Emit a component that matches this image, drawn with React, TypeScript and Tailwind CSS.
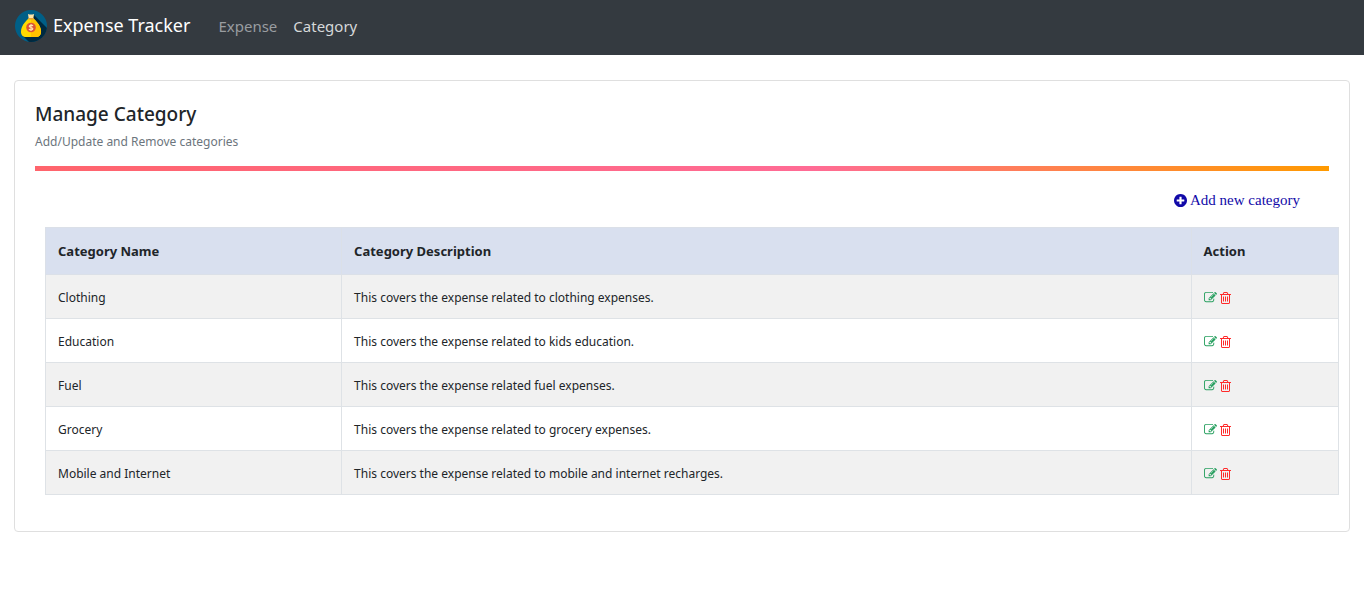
const categories = [
  { name: "Clothing", description: "This covers the expense related to clothing expenses." },
  { name: "Education", description: "This covers the expense related to kids education." },
  { name: "Fuel", description: "This covers the expense related fuel expenses." },
  { name: "Grocery", description: "This covers the expense related to grocery expenses." },
  { name: "Mobile and Internet", description: "This covers the expense related to mobile and internet recharges." },
];

function MoneyBagLogo() {
  return (
    <svg viewBox="0 0 32 32" className="size-8 shrink-0" aria-hidden="true">
      <defs>
        <clipPath id="disc">
          <circle cx="16" cy="16" r="16" />
        </clipPath>
      </defs>
      <g clipPath="url(#disc)">
        <rect width="32" height="32" fill="#005f87" />
        <path d="M19 5 L34 20 V34 H16 L8 26 Z" fill="#00293f" />
        <path d="M13.5 8.5 C10 12 6 16 6 21.5 C6 25.5 8 27 11 27 H21 C24 27 26 25.5 26 21.5 C26 16 22 12 18.5 8.5 Z" fill="#ffda00" />
        <path d="M16 8.5 H18.5 C22 12 26 16 26 21.5 C26 25.5 24 27 21 27 H16 Z" fill="#ffc200" />
        <path d="M13 4 Q16 5.2 19 4 L18.3 8.5 H13.7 Z" fill="#fee6a8" />
        <path d="M13.4 8 H18.6 V9.4 H13.4 Z" fill="#e8a33a" />
        <circle cx="16" cy="17.5" r="4.8" fill="#dc5336" />
        <path
          d="M17.9 16 C17.5 14.9 14.2 14.8 14.2 16.3 C14.2 17.8 17.9 17.2 17.9 18.8 C17.9 20.3 14.4 20.2 14 19 M16 14 V21"
          fill="none"
          stroke="#ffe7ae"
          strokeWidth="1.1"
        />
      </g>
    </svg>
  );
}

function PlusCircleIcon() {
  return (
    <svg viewBox="128 128 1536 1536" className="size-[13px]" fill="currentColor" aria-hidden="true">
      <path d="M1344 960v-128q0-26-19-45t-45-19h-256v-256q0-26-19-45t-45-19h-128q-26 0-45 19t-19 45v256h-256q-26 0-45 19t-19 45v128q0 26 19 45t45 19h256v256q0 26 19 45t45 19h128q26 0 45-19t19-45v-256h256q26 0 45-19t19-45zm320-64q0 209-103 385.5t-279.5 279.5-385.5 103-385.5-103-279.5-279.5-103-385.5 103-385.5 279.5-279.5 385.5-103 385.5 103 279.5 279.5 103 385.5z" />
    </svg>
  );
}

function EditIcon() {
  return (
    <svg viewBox="0 0 1792 1792" className="size-[13px]" fill="currentColor" aria-hidden="true">
      <path d="M888 1184l116-116-152-152-116 116v56h96v96h56zm440-720q-16-16-33 1l-350 350q-17 17-1 33t33-1l350-350q17-17 1-33zm80 594v190q0 119-84.5 203.5t-203.5 84.5h-832q-119 0-203.5-84.5t-84.5-203.5v-832q0-119 84.5-203.5t203.5-84.5h832q63 0 117 25 15 7 18 23 3 17-9 29l-49 49q-14 14-32 8-23-6-45-6h-832q-66 0-113 47t-47 113v832q0 66 47 113t113 47h832q66 0 113-47t47-113v-126q0-13 9-22l64-64q15-15 35-7t20 29zm-96-738l288 288-672 672h-288v-288zm444 132l-92 92-288-288 92-92q28-28 68-28t68 28l152 152q28 28 28 68t-28 68z" />
    </svg>
  );
}

function TrashIcon() {
  return (
    <svg viewBox="192 0 1408 1792" className="h-[14px] w-[11px]" fill="currentColor" aria-hidden="true">
      <path d="M704 736v576q0 14-9 23t-23 9h-64q-14 0-23-9t-9-23v-576q0-14 9-23t23-9h64q14 0 23 9t9 23zm256 0v576q0 14-9 23t-23 9h-64q-14 0-23-9t-9-23v-576q0-14 9-23t23-9h64q14 0 23 9t9 23zm256 0v576q0 14-9 23t-23 9h-64q-14 0-23-9t-9-23v-576q0-14 9-23t23-9h64q14 0 23 9t9 23zm128 724v-948h-896v948q0 22 7 40.5t14.5 27 10.5 8.5h832q3 0 10.5-8.5t14.5-27 7-40.5zm-672-1076h448l-48-117q-7-9-17-11h-317q-10 2-17 11zm928 32v64q0 14-9 23t-23 9h-96v948q0 83-47 143.5t-113 60.5h-832q-66 0-113-58.5t-47-141.5v-952h-96q-14 0-23-9t-9-23v-64q0-14 9-23t23-9h309l70-167q15-37 54-63t79-26h320q40 0 79 26t54 63l70 167h309q14 0 23 9t9 23z" />
    </svg>
  );
}

export default function App() {
  return (
    <div className="min-h-screen bg-white font-['Noto_Sans','Open_Sans',sans-serif] text-[#212529]">
      <nav className="flex h-[55px] items-center bg-[#343a40] px-[15px] pb-1">
        <a href="#" className="flex items-center gap-1.5 text-[18px] leading-8 text-white">
          <MoneyBagLogo />
          <span className="pb-[2px] leading-6">Expense Tracker</span>
        </a>
        <div className="ml-7 flex gap-4 text-[15px] leading-6">
          <a href="#expense" className="text-[#999da0]">Expense</a>
          <a href="#category" className="text-[#d6d8d9]">Category</a>
        </div>
      </nav>

      <main className="mx-[14px] mt-[25px] rounded border border-[#dfdfdf] px-5 pt-5 pb-9">
        <h1 className="text-[19px] leading-[26px] font-medium">Manage Category</h1>
        <p className="mt-[3px] text-xs leading-6 text-[#6c757d]">Add/Update and Remove categories</p>
        <div className="mt-3 h-[5px] bg-[linear-gradient(90deg,#ff646c,#ff6b95_60%,#ff9a00)]" />

        <div className="mt-[18px] flex justify-end pr-[29px]">
          <a
            href="#add"
            className="flex items-center gap-[3px] font-['Liberation_Serif',serif] text-[15px] leading-[22px] text-[#1109a8]"
          >
            <PlusCircleIcon />
            Add new category
          </a>
        </div>

        <div className="mt-4 -mr-[10px] ml-[10px]">
          <table className="w-full table-fixed border-collapse text-left text-xs leading-5">
            <colgroup>
              <col className="w-[22.9%]" />
              <col className="w-[65.7%]" />
              <col className="w-[11.4%]" />
            </colgroup>
            <thead>
              <tr className="h-[47px] bg-[#d9e0ef] text-[13px]">
                <th className="border border-[#dbe0e8] px-3 font-bold">Category Name</th>
                <th className="border border-[#dbe0e8] px-3 font-bold">Category Description</th>
                <th className="border border-[#dbe0e8] px-3 font-bold">Action</th>
              </tr>
            </thead>
            <tbody>
              {categories.map((category) => (
                <tr key={category.name} className="h-11 odd:bg-[#f1f1f1]">
                  <td className="border border-[#dee2e6] px-3 pt-[2px]">{category.name}</td>
                  <td className="border border-[#dee2e6] px-3 pt-[2px]">{category.description}</td>
                  <td className="border border-[#dee2e6] px-3 pt-[2px]">
                    <div className="flex items-center gap-[3px]">
                      <button type="button" aria-label={`Edit ${category.name}`} className="text-[#28a060]">
                        <EditIcon />
                      </button>
                      <button type="button" aria-label={`Delete ${category.name}`} className="text-[#ff2a2a]">
                        <TrashIcon />
                      </button>
                    </div>
                  </td>
                </tr>
              ))}
            </tbody>
          </table>
        </div>
      </main>
    </div>
  );
}
